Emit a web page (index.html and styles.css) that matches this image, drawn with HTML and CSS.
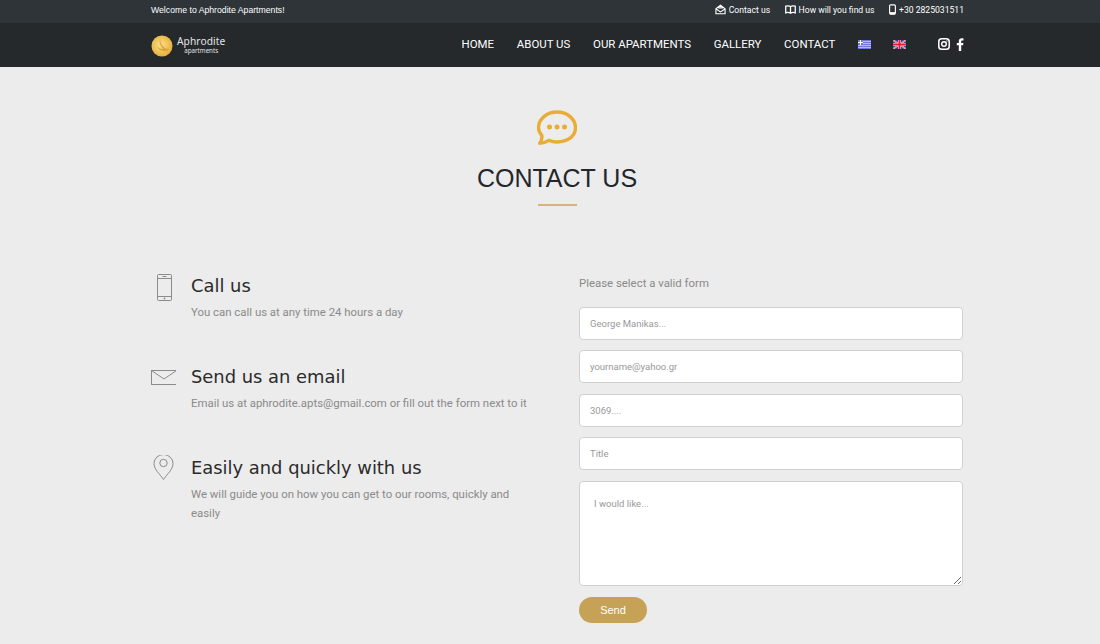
FILE: index.html
```html
<!DOCTYPE html>
<html lang="en">
<head>
<meta charset="utf-8">
<title>Contact us - Aphrodite Apartments</title>
<link rel="stylesheet" href="styles.css">
</head>
<body>
<header class="site-header">
  <div class="topbar">
    <div class="wrap topbar-inner">
      <span class="welcome">Welcome to Aphrodite Apartments!</span>
      <ul class="toplinks">
        <li>
          <svg class="ti" viewBox="0 0 12 12" width="11" height="11"><path d="M1 5.200 6 1.400l5 3.800v5.400H1z M1.200 5.400 6 8.600l4.800-3.200 M3.500 4.200h5" fill="none" stroke="#fff" stroke-width="1.200"/></svg>
          <span>Contact us</span>
        </li>
        <li>
          <svg class="ti" viewBox="0 0 12 12" width="11" height="11"><path d="M.8 2.400c2-.7 3.700-.5 5.200.4 1.500-.9 3.200-1.100 5.200-.4v7.200c-2-.7-3.700-.5-5.200.4-1.500-.9-3.200-1.100-5.200-.4z M6 2.800V10" fill="none" stroke="#fff" stroke-width="1.400"/></svg>
          <span>How will you find us</span>
        </li>
        <li>
          <svg class="ti" viewBox="0 0 8 12" width="7" height="11"><rect x=".7" y=".7" width="6.600" height="10.600" rx="1.200" fill="none" stroke="#fff" stroke-width="1.300"/><path d="M1 9h6v2.500H1z" fill="#fff"/></svg>
          <span>+30 2825031511</span>
        </li>
      </ul>
    </div>
  </div>
  <div class="navbar">
    <div class="wrap navbar-inner">
      <a class="logo" href="#">
        <svg class="logo-mark" viewBox="0 0 22 22" width="22" height="22">
          <defs><radialGradient id="gold" cx=".45" cy=".45" r=".6"><stop offset="0" stop-color="#fbe08a"/><stop offset="1" stop-color="#e4ad33"/></radialGradient></defs>
          <circle cx="11" cy="11" r="10.500" fill="url(#gold)"/>
          <path d="M9 3c-1 4 0 8 3 11-3 0-5-1-6-3 1 3 4 5 8 5 2 0 3-1 4-2-3 0-5-1-6-3-2-2-3-5-3-8z" fill="#c98a1e" opacity=".6"/>
        </svg>
        <span class="logo-text"><span class="logo-name">Aphrodite</span><span class="logo-sub">apartments</span></span>
      </a>
      <nav class="menu">
        <a href="#">HOME</a>
        <a href="#">ABOUT US</a>
        <a href="#">OUR APARTMENTS</a>
        <a href="#">GALLERY</a>
        <a href="#">CONTACT</a>
        <svg class="flag" viewBox="0 0 13 9" width="13" height="9">
          <rect width="13" height="9" fill="#7276da"/>
          <path d="M0 1.500h13M0 3.500h13M0 5.500h13M0 7.500h13" stroke="#c9cbf2" stroke-width=".8"/>
          <rect width="5" height="5" fill="#7276da"/>
          <path d="M2.500 0v5M0 2.500h5" stroke="#fff" stroke-width="1"/>
        </svg>
        <svg class="flag" viewBox="0 0 13 9" width="13" height="9">
          <rect width="13" height="9" fill="#3c3c96"/>
          <path d="M0 0l13 9M13 0 0 9" stroke="#f4dfe4" stroke-width="1.600"/>
          <path d="M0 0l13 9M13 0 0 9" stroke="#d8213f" stroke-width=".6"/>
          <path d="M6.500 0v9M0 4.500h13" stroke="#f4e6ea" stroke-width="3"/>
          <path d="M6.500 0v9M0 4.500h13" stroke="#e0183c" stroke-width="1.900"/>
        </svg>
        <span class="social">
          <svg viewBox="0 0 12 12" width="12" height="12"><rect x=".8" y=".8" width="10.400" height="10.400" rx="2.800" fill="none" stroke="#fff" stroke-width="1.500"/><circle cx="6" cy="6" r="2.300" fill="none" stroke="#fff" stroke-width="1.400"/><circle cx="9" cy="3" r=".7" fill="#fff"/></svg>
          <svg viewBox="0 0 8 13" width="8" height="13"><path d="M5.200 13V7.300h1.900l.3-2.300H5.200V3.600c0-.7.200-1.100 1.100-1.100h1.200V.4C7.300.3 6.600.2 5.800.2 4 .2 2.800 1.300 2.800 3.300V5H.8v2.300h2V13z" fill="#fff"/></svg>
        </span>
      </nav>
    </div>
  </div>
</header>

<main class="wrap">
  <section class="heading">
    <svg class="bubble" viewBox="0 0 40 35" width="40" height="35">
      <path d="M4.800 25.500C2.700 23.300 1.500 20.700 1.500 17.800 1.500 9 9.800 2 20 2s18.500 7 18.500 15.800S30.200 32 20 32c-3 0-5.800-.6-8.300-1.700-2.500 1.700-5.700 2.800-9 2.900 1.200-1.100 2.300-3.700 2.100-7.700z" fill="none" stroke="#e9ad36" stroke-width="3.400" stroke-linejoin="round"/>
      <circle cx="12.500" cy="17" r="2.500" fill="#e9ad36"/><circle cx="20" cy="17" r="2.500" fill="#e9ad36"/><circle cx="27.500" cy="17" r="2.500" fill="#e9ad36"/>
    </svg>
    <h1>CONTACT US</h1>
    <div class="rule"></div>
  </section>

  <section class="columns">
    <div class="info">
      <article class="info-item">
        <svg class="info-icon" viewBox="0 0 26 30" width="26" height="30"><g fill="none" stroke="#8b8b8b" stroke-width="1"><rect x="7.500" y="1.500" width="14" height="26" rx="1"/><path d="M7.500 5.500h14M7.500 23.500h14M12.500 3.500h4"/></g><circle cx="14.500" cy="25.500" r=".9" fill="#8b8b8b"/></svg>
        <div>
          <h3>Call us</h3>
          <p>You can call us at any time 24 hours a day</p>
        </div>
      </article>
      <article class="info-item">
        <svg class="info-icon" viewBox="0 0 26 30" width="26" height="30"><g fill="none" stroke="#8b8b8b" stroke-width="1"><rect x="1.500" y="6.500" width="25" height="14"/><path d="M1.500 6.500 14 15l12.500-8.500"/></g></svg>
        <div>
          <h3>Send us an email</h3>
          <p>Email us at aphrodite.apts@gmail.com or fill out the form next to it</p>
        </div>
      </article>
      <article class="info-item">
        <svg class="info-icon" viewBox="0 0 26 30" width="26" height="30"><g fill="none" stroke="#8b8b8b" stroke-width="1"><path d="M13.500 24.500C9.500 18.500 4 14.500 4 8.500a9.500 9 0 0 1 19 0c0 6-5.500 10-9.500 16z"/><circle cx="13.500" cy="8" r="3.700"/></g></svg>
        <div>
          <h3>Easily and quickly with us</h3>
          <p>We will guide you on how you can get to our rooms, quickly and easily</p>
        </div>
      </article>
    </div>
    <form class="contact-form">
      <label class="form-note">Please select a valid form</label>
      <input type="text" placeholder="George Manikas...">
      <input type="email" placeholder="yourname@yahoo.gr">
      <input type="text" placeholder="3069....">
      <input type="text" placeholder="Title">
      <textarea placeholder="I would like..."></textarea>
      <button type="button">Send</button>
    </form>
  </section>
</main>
</body>
</html>
```
FILE: styles.css
```css
* { box-sizing: border-box; }
html, body { margin: 0; padding: 0; height: 100%; overflow: hidden; }
body { background: #ececec; font-family: Roboto, sans-serif; color: #222; }
.wrap { width: 814px; margin-left: 150px; }
a { color: inherit; text-decoration: none; }

.topbar { height: 23px; background: #2e3438; color: #fff; }
.topbar-inner { height: 100%; display: flex; justify-content: space-between; align-items: center; padding-bottom: 4px; padding-left: 1px; }
.welcome { font-family: "Liberation Sans", Arial, sans-serif; font-size: 8.700px; }
.toplinks { list-style: none; margin: 0; padding: 0; display: flex; gap: 14.500px; }
.toplinks li { display: flex; align-items: center; gap: 3px; }
.toplinks li span { font-size: 8.600px; }
.ti { display: block; }

.navbar { height: 44px; background: #25292c; color: #fff; }
.navbar-inner { height: 100%; display: flex; justify-content: space-between; align-items: center; padding-bottom: 2px; padding-left: 1px; }
.logo { display: flex; align-items: center; gap: 4px; }
.logo-mark { display: block; margin-top: 3px; }
.logo-text { display: flex; flex-direction: column; align-items: center; margin-top: 1px; color: #e4e4e4; }
.logo-name { font-family: "Noto Sans", sans-serif; font-size: 10.200px; line-height: 11px; letter-spacing: .1px; }
.logo-sub { font-family: "Noto Sans", sans-serif; font-size: 6.200px; line-height: 7px; }
.menu { display: flex; align-items: center; font-size: 11.450px; font-weight: 400; }
.menu a { margin-right: 22.700px; }
.flag { display: block; margin-right: 22px; }
.social { display: flex; align-items: center; gap: 6px; margin-left: 10px; }
.social svg { display: block; }

.heading { display: flex; flex-direction: column; align-items: center; padding-top: 43px; }
.bubble { display: block; }
h1 { margin: 17px 0 0; font-family: "Liberation Sans", Arial, sans-serif; font-weight: 400; font-size: 25px; line-height: 32px; color: #23272b; }
.rule { width: 39px; height: 2px; background: #d4b67a; margin-top: 10px; }

.columns { display: grid; grid-template-columns: 429px 385px; margin-top: 67px; }
.info { display: flex; flex-direction: column; gap: 42px; }
.info-item { display: flex; gap: 15px; }
.info-icon { flex: none; display: block; }
h3 { margin: 1px 0 0; font-family: "DejaVu Sans", Verdana, sans-serif; font-weight: 400; font-size: 17.900px; line-height: 24px; color: #2b2b2b; }
.info p { margin: 5px 0 0; font-size: 11.400px; line-height: 19px; color: #8a8a8a; max-width: 340px; }

.contact-form { display: flex; flex-direction: column; }
.form-note { font-size: 11.400px; line-height: 20px; color: #8a8a8a; margin: 0 0 14px; }
input, textarea { display: block; width: 384px; background: #fff; border: 1px solid #d0d0d0; border-radius: 4px; font-family: Roboto, sans-serif; font-size: 9.500px; color: #555; outline: none; }
input { height: 33px; padding: 0 10px; margin-bottom: 10.400px; }
textarea { height: 105px; padding: 16px 14px; margin-bottom: 11px; resize: vertical; }
::placeholder { color: #999; opacity: 1; }
button { width: 68px; height: 26px; border: 0; border-radius: 13px; background: #c6a256; color: #fff; font-family: "Liberation Sans", Arial, sans-serif; font-size: 11px; padding: 0; }
```
